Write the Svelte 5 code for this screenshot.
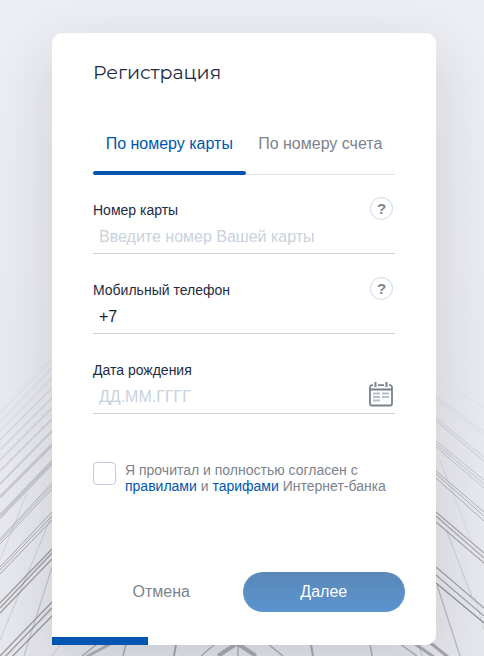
<script lang="ts">
	type Tab = 'card' | 'account';

	let tab = $state<Tab>('card');
	let cardNumber = $state('');
	let phone = $state('+7');
	let birthDate = $state('');
	let agreed = $state(false);

	const tabs: { id: Tab; title: string }[] = [
		{ id: 'card', title: 'По номеру карты' },
		{ id: 'account', title: 'По номеру счета' }
	];

	// [x1, y1, x2, y2, opacity, width]
	const beams = [
		[0, 413, 52, 359, 0.05, 2],
		[0, 422, 52, 368, 0.07, 2],
		[0, 431, 52, 378, 0.09, 2],
		[0, 440, 52, 388, 0.12, 2],
		[0, 450, 52, 398, 0.14, 2],
		[0, 460, 52, 408, 0.17, 2],
		[0, 471, 52, 419, 0.2, 2],
		[0, 484, 52, 431, 0.25, 2],
		[0, 497, 52, 445, 0.3, 3],
		[0, 515, 52, 461, 0.32, 2],
		[0, 518, 52, 464, 0.32, 2],
		[0, 539, 52, 483, 0.5, 1],
		[0, 541, 52, 486, 0.5, 1],
		[0, 544, 52, 489, 0.5, 1],
		[0, 567, 52, 512, 0.65, 1],
		[0, 570, 52, 516, 0.65, 1],
		[0, 574, 52, 520, 0.65, 1],
		[0, 603, 52, 549, 0.75, 1.3],
		[0, 608, 52, 553, 0.75, 1.3],
		[0, 613, 52, 559, 0.75, 1.3],
		[0, 656, 52, 602, 0.75, 1.4],
		[0, 662, 52, 608, 0.75, 1.4],
		[0, 669, 52, 616, 0.75, 1.4],
		[27, 493, 0, 560, 0.2, 1],
		[52, 515, 0, 640, 0.28, 1],
		[52, 567, 24, 656, 0.35, 1.2],
		[436, 377, 484, 408, 0.06, 1],
		[436, 397, 484, 432, 0.12, 1],
		[436, 400, 484, 435, 0.08, 1],
		[436, 418, 484, 457, 0.25, 1],
		[436, 421, 484, 461, 0.3, 1],
		[436, 441, 484, 480, 0.35, 1],
		[436, 444, 484, 484, 0.35, 1],
		[436, 447, 484, 488, 0.35, 1],
		[436, 471, 484, 512, 0.55, 1],
		[436, 474, 484, 516, 0.55, 1],
		[436, 478, 484, 521, 0.55, 1],
		[436, 512, 484, 553, 0.65, 1.2],
		[436, 516, 484, 558, 0.65, 1.2],
		[436, 522, 484, 563, 0.65, 1.2],
		[436, 567, 484, 608, 0.7, 1.3],
		[436, 575, 484, 616, 0.7, 1.3],
		[436, 583, 484, 623, 0.8, 1.5],
		[440, 460, 471, 540, 0.14, 1],
		[447, 532, 472, 597, 0.3, 1],
		[437, 585, 460, 656, 0.45, 1.3],
		[475, 597, 484, 630, 0.2, 1],
		[60, 645, 52, 656, 0.3, 1],
		[96, 645, 82, 656, 0.6, 1.4],
		[112, 643, 86, 657, 0.55, 3],
		[126, 644, 123, 656, 0.6, 1.5],
		[176, 644, 174, 656, 0.65, 2],
		[215, 644, 201, 656, 0.6, 1.3],
		[236, 644, 218, 656, 0.6, 4],
		[238, 644, 256, 656, 0.6, 4],
		[238, 644, 238, 656, 0.4, 2],
		[268, 644, 283, 656, 0.6, 1.5],
		[311, 644, 313, 656, 0.65, 2],
		[370, 644, 372, 656, 0.6, 1.5],
		[400, 644, 417, 656, 0.6, 1.5],
		[415, 644, 434, 657, 0.6, 3],
		[419, 645, 422, 656, 0.4, 1],
		[428, 641, 448, 657, 0.65, 3]
	];
</script>

{#snippet help(text: string)}
	<button type="button" class="help" aria-label={text}>?</button>
{/snippet}

<main class="page">
	<svg class="backdrop" viewBox="0 0 484 656" preserveAspectRatio="xMidYMax slice" aria-hidden="true">
		{#each beams as [x1, y1, x2, y2, opacity, width]}
			<line {x1} {y1} {x2} {y2} stroke="#85868b" stroke-opacity={opacity} stroke-width={width} />
		{/each}
	</svg>

	<form class="card" onsubmit={(e) => e.preventDefault()}>
		<h1 class="title">Регистрация</h1>

		<div class="tabs" role="tablist">
			{#each tabs as t}
				<button
					type="button"
					role="tab"
					class="tab"
					class:tab--active={tab === t.id}
					aria-selected={tab === t.id}
					onclick={() => (tab = t.id)}
				>{t.title}</button>
			{/each}
		</div>

		<div class="field">
			<label for="card-number">Номер карты</label>
			<input id="card-number" type="text" placeholder="Введите номер Вашей карты" bind:value={cardNumber} />
			{@render help('Подсказка: номер карты')}
		</div>

		<div class="field">
			<label for="phone">Мобильный телефон</label>
			<input id="phone" type="tel" bind:value={phone} />
			{@render help('Подсказка: мобильный телефон')}
		</div>

		<div class="field">
			<label for="birth-date">Дата рождения</label>
			<input id="birth-date" type="text" placeholder="ДД.ММ.ГГГГ" bind:value={birthDate} />
			<button type="button" class="calendar" aria-label="Выбрать дату">
				<svg width="24" height="25" viewBox="0 0 24 25" fill="none" aria-hidden="true">
					<path d="M4 3.2H3a2 2 0 0 0-2 2v16.3a2 2 0 0 0 2 2h18a2 2 0 0 0 2-2V5.2a2 2 0 0 0-2-2h-1M9 3.2h6M1 7.5h22" stroke="#78828e" stroke-width="1.8" />
					<path d="M6.500 0v5M17.500 0v5" stroke="#78828e" stroke-width="2" />
					<path d="M4 11.500h7M4 15h7M4 18.500h7M13 11.500h7M13 15h7" stroke="#b4bfc9" stroke-width="1.8" />
				</svg>
			</button>
		</div>

		<div class="agree">
			<input id="agree" type="checkbox" bind:checked={agreed} />
			<label for="agree">
				Я прочитал и полностью согласен с <a href="#rules">правилами</a> и <a href="#tariffs">тарифами</a> Интернет-банка
			</label>
		</div>

		<div class="actions">
			<button type="button" class="cancel">Отмена</button>
			<button type="submit" class="next">Далее</button>
		</div>

		<div class="progress"></div>
	</form>
</main>

<style>
	:global(body) {
		margin: 0;
		background: #edeef3;
	}

	.page {
		position: relative;
		box-sizing: border-box;
		min-height: 100vh;
		padding: 33px 48px 11px 52px;
		overflow: hidden;
		background: linear-gradient(#edeef3 0%, #e9eaef 55%, #e6e7ec 100%);
		font-family: "Liberation Sans", Arial, sans-serif;
		font-size: 16px;
		color: #1f2a44;
	}

	.backdrop {
		position: absolute;
		inset: 0;
		width: 100%;
		height: 100%;
	}

	.card {
		position: relative;
		max-width: 384px;
		margin: 0 auto;
		border-radius: 10px 10px 10px 0;
		background: #fff;
		box-shadow: 0 20px 60px rgba(30, 35, 55, 0.14);
	}

	button {
		padding: 0;
		border: 0;
		background: none;
		font: inherit;
		cursor: pointer;
	}

	.title {
		margin: 0 41px;
		padding-top: 28px;
		font-family: Montserrat, Inter, sans-serif;
		font-size: 19px;
		font-weight: 400;
		line-height: 24px;
	}

	.tabs {
		display: flex;
		margin: 36px 41px 27px;
		border-bottom: 1px solid #dfe2ec;
	}

	.tab {
		position: relative;
		flex: 1 1 auto;
		height: 53px;
		padding-bottom: 8px;
		color: #7d838d;
		white-space: nowrap;
	}

	.tab--active {
		color: #0055b0;
	}

	.tab--active::after {
		content: '';
		position: absolute;
		left: 0;
		right: 0;
		bottom: -1px;
		height: 4px;
		border-radius: 2px;
		background: #0055b0;
	}

	.field {
		position: relative;
		height: 51px;
		margin: 0 41px 28px;
		border-bottom: 1px solid #c9d2dc;
	}

	.field label {
		display: block;
		font-size: 14px;
		line-height: 16px;
	}

	.field input {
		box-sizing: border-box;
		display: block;
		width: 100%;
		height: 35px;
		padding: 3px 32px 0 6px;
		border: 0;
		outline: 0;
		background: none;
		font: inherit;
		color: #1b1f2a;
	}

	.field input::placeholder {
		color: #c8d2dc;
		opacity: 1;
	}

	.help {
		position: absolute;
		top: -5px;
		right: 2px;
		width: 23px;
		height: 23px;
		border: 1px solid #cdd8e4;
		border-radius: 50%;
		font-size: 15px;
		font-weight: 700;
		line-height: 21px;
		color: #7f858f;
	}

	.calendar {
		position: absolute;
		right: 2px;
		bottom: 6px;
		height: 25px;
	}

	.calendar svg {
		display: block;
	}

	.agree {
		display: flex;
		gap: 9px;
		margin: 48px 41px 0;
		font-size: 14px;
		line-height: 16px;
		color: #7d838d;
	}

	.agree input {
		flex: none;
		appearance: none;
		width: 23px;
		height: 23px;
		margin: 0;
		border: 1px solid #c3cbd9;
		border-radius: 4px;
	}

	.agree input:checked {
		background: #0055b0;
	}

	.agree a {
		color: #0055b0;
		text-decoration: none;
	}

	.actions {
		display: flex;
		margin: 78px 31px 0 28px;
	}

	.cancel {
		flex: 1;
		color: #7d838d;
	}

	.next {
		flex: 1;
		height: 40px;
		border-radius: 20px;
		background: linear-gradient(#5a88b8, #5c94d0);
		color: #fff;
	}

	.progress {
		width: 25%;
		height: 8px;
		margin-top: 25px;
		background: #0055b0;
	}
</style>
